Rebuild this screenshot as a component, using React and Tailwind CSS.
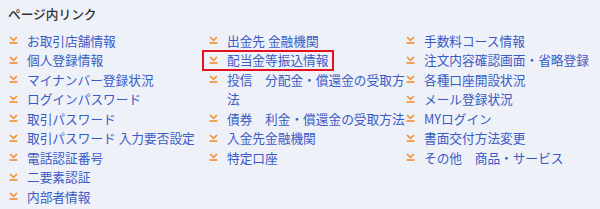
import React from "react";

const Icon = () => (
  <span className="flex h-[19.5px] w-[9px] shrink-0 items-center mr-[9px]">
    <svg width="9" height="8" viewBox="0 0 9 8" fill="none">
      <polyline points="1,1 4.5,4.3 8,1" stroke="#f39237" strokeWidth="1.7" fill="none" />
      <line x1="0.5" y1="7" x2="8.5" y2="7" stroke="#f39237" strokeWidth="1.7" />
    </svg>
  </span>
);

const Item = ({ text, boxed }) => (
  <li className="flex">
    {boxed ? (
      <span className="relative inline-flex">
        <span className="absolute -left-[7px] -right-[5px] top-0 -bottom-[1px] border-2 border-[#e3101f]"></span>
        <Icon />
        <a className="text-[#3a5ac6]">{text}</a>
      </span>
    ) : (
      <>
        <Icon />
        <a className="text-[#3a5ac6]">{text}</a>
      </>
    )}
  </li>
);

const col1 = [
  "お取引店舗情報",
  "個人登録情報",
  "マイナンバー登録状況",
  "ログインパスワード",
  "取引パスワード",
  "取引パスワード 入力要否設定",
  "電話認証番号",
  "二要素認証",
  "内部者情報",
];
const col2 = [
  "出金先 金融機関",
  "配当金等振込情報",
  "投信　分配金・償還金の受取方法",
  "債券　利金・償還金の受取方法",
  "入金先金融機関",
  "特定口座",
];
const col3 = [
  "手数料コース情報",
  "注文内容確認画面・省略登録",
  "各種口座開設状況",
  "メール登録状況",
  "MYログイン",
  "書面交付方法変更",
  "その他　商品・サービス",
];

export default function App() {
  return (
    <div
      className="w-[600px] h-[209px] bg-[#eef2f8] overflow-hidden text-[12.7px] leading-[19.5px]"
      style={{ fontFamily: '"Noto Sans CJK JP", "Noto Sans", sans-serif' }}
    >
      <div className="pt-[4px] pl-[8px] text-[12.7px] font-medium text-[#333] leading-[19.5px]">
        ページ内リンク
      </div>
      <div className="mt-[7px] flex pl-[9px]">
        <ul className="w-[200px]">
          {col1.map((t) => (
            <Item key={t} text={t} />
          ))}
        </ul>
        <ul className="w-[197px]">
          {col2.map((t) => (
            <Item key={t} text={t} boxed={t === "配当金等振込情報"} />
          ))}
        </ul>
        <ul className="flex-1">
          {col3.map((t) => (
            <Item key={t} text={t} />
          ))}
        </ul>
      </div>
    </div>
  );
}
